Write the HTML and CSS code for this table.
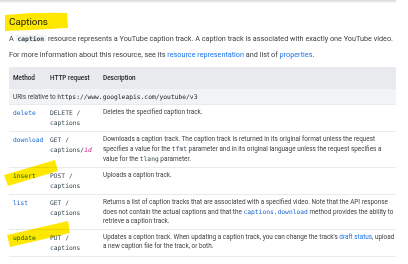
FILE: index.html
```html
<!DOCTYPE html>
<html lang="en">
<head>
<meta charset="utf-8">
<link rel="stylesheet" href="styles.css">
</head>
<body>
<div class="topbar"></div>
<main class="content">
  <h2 class="title">Captions</h2>
  <p class="intro">A <code class="chip">caption</code> resource represents a YouTube caption track. A caption track is associated with exactly one YouTube video.</p>
  <p class="intro">For more information about this resource, see its <a href="#">resource representation</a> and list of <a href="#">properties</a>.</p>
  <table class="methods">
    <colgroup><col class="c1"><col class="c2"><col class="c3"></colgroup>
    <thead>
      <tr><th>Method</th><th>HTTP request</th><th>Description</th></tr>
    </thead>
    <tbody>
      <tr class="uris"><td colspan="3">URIs relative to <code>https://www.googleapis.com/youtube/v3</code></td></tr>
      <tr><td><code class="m">delete</code></td><td><code>DELETE /<br>captions</code></td><td class="desc">Deletes the specified caption track.</td></tr>
      <tr><td><code class="m">download</code></td><td><code>GET /<br>captions/<i class="var">id</i></code></td><td class="desc">Downloads a caption track. The caption track is returned in its original format unless the request specifies a value for the <code>tfmt</code> parameter and in its original language unless the request specifies a value for the <code>tlang</code> parameter.</td></tr>
      <tr><td><code class="m">insert</code></td><td><code>POST /<br>captions</code></td><td class="desc">Uploads a caption track.</td></tr>
      <tr><td><code class="m">list</code></td><td><code>GET /<br>captions</code></td><td class="desc">Returns a list of caption tracks that are associated with a specified video. Note that the API response does not contain the actual captions and that the <code class="m">captions.download</code> method provides the ability to retrieve a caption track.</td></tr>
      <tr><td><code class="m">update</code></td><td><code>PUT /<br>captions</code></td><td class="desc">Updates a caption track. When updating a caption track, you can change the track's <a href="#">draft status</a>, upload a new caption file for the track, or both.</td></tr>
    </tbody>
  </table>
</main>
<svg class="marks" width="408" height="264" viewBox="0 0 408 264">
  <path d="M5 15 Q36 12 67 13 L68 28 Q36 30 5 31 Z" fill="#ffe800"/>
  <path d="M4 175 L55 160 L58 171 L8 186 Z" fill="#ffe800"/>
  <path d="M7 235 L68 221 L70 233 L10 247 Z" fill="#ffe800"/>
</svg>
</body>
</html>
```
FILE: styles.css
```css
html, body {
  margin: 0;
  padding: 0;
  background: #ffffff;
}
body {
  position: relative;
  width: 408px;
  height: 264px;
  overflow: hidden;
  font-family: Roboto, "Liberation Sans", sans-serif;
  color: #202124;
}
.topbar {
  width: 396px;
  height: 1px;
  background: #dadce0;
  box-shadow: 0 1px 2px rgba(60, 64, 67, 0.25);
}
.content {
  padding: 0 12px 0 9px;
}
.title {
  margin: 14px 0 0;
  font-size: 9.8px;
  font-weight: 400;
  line-height: 13px;
  color: #202124;
}
.intro {
  margin: 5px 0 0;
  font-size: 7.25px;
  line-height: 11px;
  color: #3c4043;
}
.intro + .intro {
  margin-top: 5px;
}
a {
  color: #1a73e8;
  text-decoration: none;
}
code {
  font-family: "DejaVu Sans Mono", "Liberation Mono", monospace;
  font-size: 6.3px;
  line-height: 9px;
  color: #37474f;
}
.chip {
  background: #f1f3f4;
  padding: 0 2px;
  border-radius: 1px;
  font-weight: 700;
  color: #37474f;
}
.methods {
  margin-top: 7px;
  width: 387px;
  border-collapse: collapse;
  table-layout: fixed;
  font-size: 6.4px;
  line-height: 9px;
  color: #3c4043;
}
.c1 { width: 37px; }
.c2 { width: 53px; }
th {
  background: #e8eaed;
  text-align: left;
  font-weight: 500;
  color: #202124;
  padding: 6.5px 4px 6px;
}
td {
  vertical-align: top;
  padding: 3.5px 2px 2.5px 4px;
  border-bottom: 1px solid #e8eaed;
}
td.desc {
  padding-right: 0;
}
.uris td {
  background: #f1f3f4;
  padding: 3px 4px 2px;
}
.uris code {
  color: #202124;
}
.m {
  color: #1967d2;
}
.var {
  color: #d01884;
}
.marks {
  position: absolute;
  left: 0;
  top: 0;
  mix-blend-mode: multiply;
  pointer-events: none;
}
```
